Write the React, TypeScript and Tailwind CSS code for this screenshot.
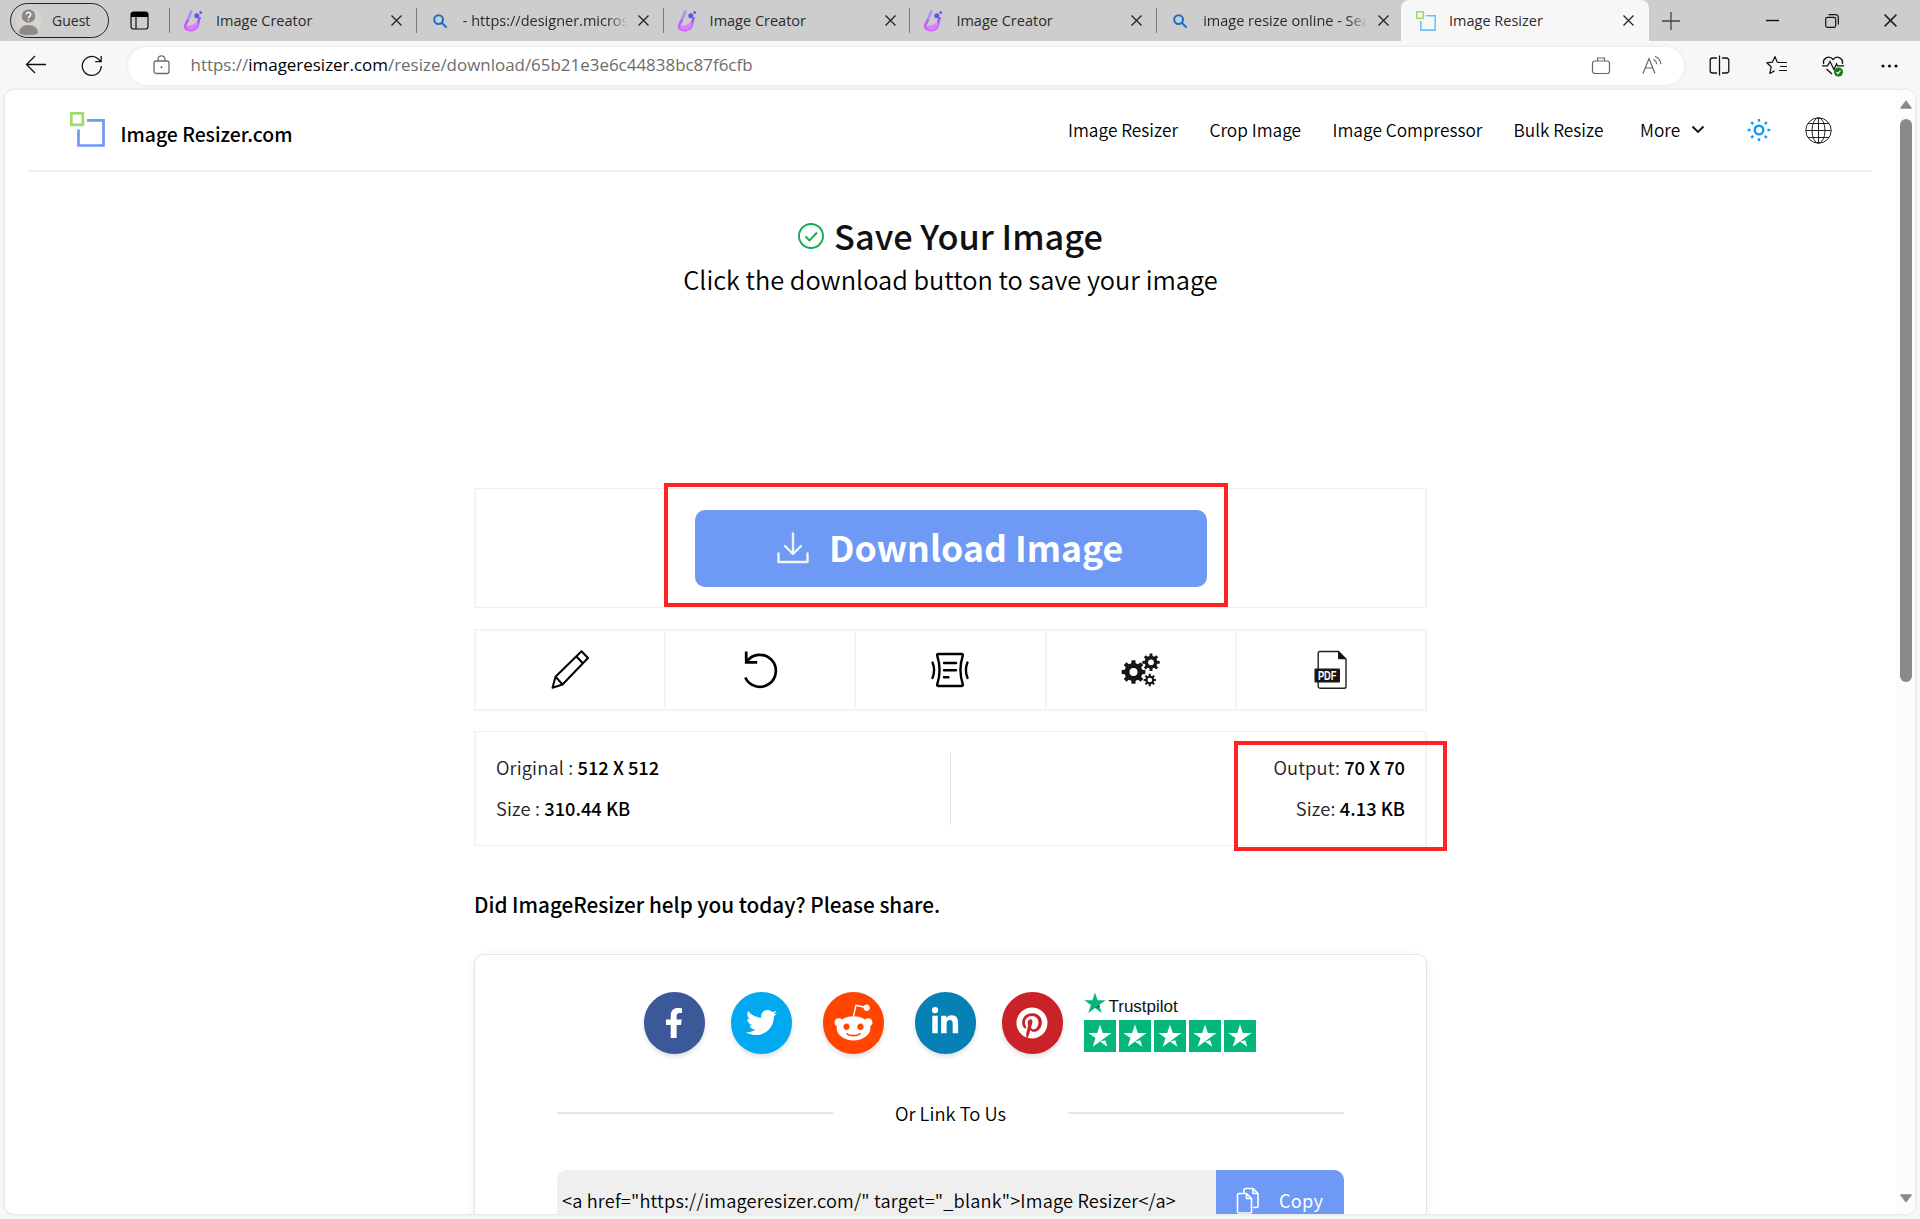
import type { ReactNode } from "react";
import { FaFacebookF, FaLinkedinIn, FaPinterest, FaRedditAlien, FaTwitter } from "react-icons/fa";

/* ---------- browser chrome icons ---------- */

function CloseX({ size = 11 }: { size?: number }) {
  return (
    <svg width={size} height={size} viewBox="0 0 11 11" stroke="#222" strokeWidth="1.3" className="shrink-0">
      <path d="M.5.5l10 10M10.5.5l-10 10" />
    </svg>
  );
}

function CreatorIcon() {
  return (
    <svg width="20" height="22" viewBox="0 0 20 22" fill="none">
      <defs>
        <linearGradient id="flask" x1="14" y1="5" x2="5" y2="21" gradientUnits="userSpaceOnUse">
          <stop stopColor="#7b5cf0" />
          <stop offset=".5" stopColor="#b765f5" />
          <stop offset="1" stopColor="#d95cf8" />
        </linearGradient>
      </defs>
      <path d="M8.200 1.500L3.800 12.500" stroke="#b98df5" strokeWidth="2.800" strokeLinecap="round" />
      <path d="M4.500 10.500L2.300 15C1.500 18.500 4.500 20.500 8.500 20.200c4.500-.4 6.500-3.500 6.800-7.200l.9-4.500" stroke="url(#flask)" strokeWidth="2.600" strokeLinecap="round" />
      <path d="M4 15.500c3 .5 6.500-.5 9.500-3.500l2 1.500c-1 4-3.500 6.500-7.500 6.500-3 0-5-1.500-4-4.500z" fill="#d982fa" />
      <circle cx="13.800" cy="5.800" r="2.500" fill="#5f55e8" />
      <circle cx="17.700" cy="2.600" r="1.400" fill="#6a48e6" />
      <circle cx="17" cy="8" r="1" fill="#7f64ee" />
    </svg>
  );
}

function SearchIcon() {
  return (
    <svg width="14" height="14" viewBox="0 0 14 14" fill="none" stroke="#1a6fc9" strokeWidth="2" strokeLinecap="round">
      <circle cx="5.600" cy="5.600" r="4.400" />
      <path d="M9 9l4 4" />
    </svg>
  );
}

function ResizerMark({ size, blue }: { size: number; blue: string }) {
  return (
    <svg width={size} height={size} viewBox="0 0 35 35" fill="none">
      <rect x="1.300" y="1.300" width="11.500" height="11.500" stroke="#a0da6c" strokeWidth="2.700" />
      <path d="M17 8.300h16.500v25.200H8.500V17.500" stroke={blue} strokeWidth="2.700" />
    </svg>
  );
}

function Tab({ icon, title, fade }: { icon: ReactNode; title: string; fade?: boolean }) {
  return (
    <div className="flex h-[41px] w-[246.8px] shrink-0 items-center">
      <div className="h-[25px] w-px shrink-0 bg-[#7a7a7a]" />
      <div className="flex w-[46px] shrink-0 justify-center">{icon}</div>
      <div
        className={
          fade
            ? "w-[175px] whitespace-nowrap leading-[40px] [mask-image:linear-gradient(to_right,#000_83%,transparent_94%)]"
            : "w-[175px] whitespace-nowrap leading-[40px]"
        }
      >
        {title}
      </div>
      <CloseX />
    </div>
  );
}

function TabBar() {
  return (
    <div className="flex h-[41px] shrink-0 items-center bg-[#cdcdcd] text-[14.500px] text-[#2b2b2b]">
      <div className="ml-[10px] flex h-[35px] w-[99px] shrink-0 items-center rounded-full border-[1.500px] border-[#222] text-[14px]">
        <svg width="26" height="30" viewBox="0 0 26 30" className="ml-[5px]">
          <circle cx="13" cy="15" r="13" fill="#d6d3cf" />
          <circle cx="12.500" cy="10" r="6.800" fill="#8d8a86" />
          <path d="M3 27c0-5 4-8 9.500-8s9.500 3 9.500 8c-3 3-16 3-19 0z" fill="#8d8a86" />
          <path d="M10.300 8.500a2.200 2.200 0 1 1 3.400 1.900c-.8.500-1.200.8-1.200 1.700M12.500 13.200v1.300" fill="none" stroke="#fff" strokeWidth="1.400" />
        </svg>
        <span className="ml-[10px]">Guest</span>
      </div>
      <svg width="19" height="19" viewBox="0 0 19 19" className="ml-[21px] shrink-0">
        <rect x="1" y="1" width="17" height="17" rx="2.500" fill="none" stroke="#111" strokeWidth="1.200" />
        <path d="M1 6V3.500A2.500 2.500 0 0 1 3.500 1h12A2.500 2.500 0 0 1 18 3.500V6z" fill="#000" />
        <path d="M6 6v12" stroke="#111" strokeWidth="1.200" />
      </svg>
      <div className="ml-[20px] flex w-[1232px] shrink-0">
        <Tab icon={<CreatorIcon />} title="Image Creator" />
        <Tab icon={<SearchIcon />} title="- https://designer.micros" fade />
        <Tab icon={<CreatorIcon />} title="Image Creator" />
        <Tab icon={<CreatorIcon />} title="Image Creator" />
        <Tab icon={<SearchIcon />} title="image resize online - Sea" fade />
      </div>
      <div className="relative flex h-[41px] w-[248px] shrink-0 items-center rounded-t-[8px] bg-[#f7f7f7]">
        <div className="ml-[15px]">
          <ResizerMark size={20} blue="#6cc0f8" />
        </div>
        <span className="ml-[13px] w-[174px] leading-[40px]">Image Resizer</span>
        <CloseX />
      </div>
      <svg width="18" height="18" viewBox="0 0 18 18" stroke="#444" strokeWidth="1.300" className="ml-[13px] shrink-0">
        <path d="M9 0v18M0 9h18" />
      </svg>
      <svg width="13" height="13" viewBox="0 0 13 13" stroke="#111" strokeWidth="1.400" className="ml-[86px] shrink-0">
        <path d="M0 6.500h13" />
      </svg>
      <svg width="14" height="14" viewBox="0 0 14 14" fill="none" stroke="#111" strokeWidth="1.200" className="ml-[46px] shrink-0">
        <rect x=".7" y="3.300" width="10" height="10" rx="1.800" />
        <path d="M3.500.7h7.300a2.500 2.500 0 0 1 2.500 2.500v7.300" />
      </svg>
      <div className="ml-[45px]">
        <CloseX size={13} />
      </div>
    </div>
  );
}

function AddressBar() {
  return (
    <div className="flex h-[49px] shrink-0 items-center">
      <svg width="22" height="20" viewBox="0 0 22 20" fill="none" stroke="#111" strokeWidth="1.300" className="mb-px ml-[25px]">
        <path d="M21 9.500H1.500M10 1L1.500 9.500 10 18" />
      </svg>
      <svg width="22" height="22" viewBox="0 0 22 22" fill="none" stroke="#111" strokeWidth="1.300" className="ml-[34px]">
        <path d="M20.300 11a9.500 9.500 0 1 1-3-7l2.500 2.500M20.200 1v5.700h-6" />
      </svg>
      <div className="ml-[25px] flex h-[38px] w-[1556px] items-center rounded-full bg-white shadow-[0_0_4px_rgba(0,0,0,0.08)]">
        <svg width="17" height="20" viewBox="0 0 17 20" fill="none" stroke="#6a6a6a" strokeWidth="1.300" className="mb-px ml-[25px]">
          <rect x="1" y="6" width="15" height="12.500" rx="2" />
          <path d="M5 6V4.300a3.500 3.500 0 0 1 7 0V6" />
          <circle cx="8.500" cy="12.200" r=".9" fill="#444" stroke="none" />
        </svg>
        <div className="mb-px ml-[20.500px] w-[1379.500px] text-[16.950px] leading-[38px] text-[#6c6c6c]">
          https://<span className="text-black">imageresizer.com</span>/resize/download/65b21e3e6c44838bc87f6cfb
        </div>
        <svg width="20" height="19" viewBox="0 0 20 19" fill="none" stroke="#666" strokeWidth="1.200" className="mb-px ml-[21px]">
          <rect x="1.500" y="5" width="17" height="12.500" rx="2.500" />
          <path d="M6.500 5V2h7v3" />
        </svg>
        <svg width="21" height="20" viewBox="0 0 21 20" fill="none" stroke="#666" strokeWidth="1.200" className="mb-px ml-[31px]">
          <path d="M1 18.500L7 3.500l6 15M3 13h8M11.500 4.200c1.800 1 3 2.600 3.300 5M13 1.200c3.500 1.500 5.500 4.200 6 8" />
        </svg>
      </div>
      <svg width="21" height="21" viewBox="0 0 21 21" fill="none" stroke="#111" strokeWidth="1.300" className="mb-px ml-[25px]">
        <path d="M8 3H3.500A2.300 2.300 0 0 0 1.200 5.300v10.400A2.300 2.300 0 0 0 3.500 18H8M13 3h4.500a2.300 2.300 0 0 1 2.300 2.300v10.400a2.300 2.300 0 0 1-2.300 2.300H13M10.500.5v20" />
      </svg>
      <svg width="22" height="21" viewBox="0 0 22 21" fill="none" stroke="#111" strokeWidth="1.200" strokeLinejoin="round" className="ml-[36px]">
        <path d="M13.500 7.500l-2.300-.4L9 1.500 6.500 7.100l-5.800.7 4.500 4-1.400 6.700 4.700-2.600M12 7.500h9M14 11.500h7M13 15.500h8" />
      </svg>
      <svg width="22" height="22" viewBox="0 0 22 22" fill="none" stroke="#111" strokeWidth="1.300" className="ml-[34px]">
        <path d="M1.800 9C0 3.500 7-.5 11 4.500 15-.5 22 3.500 20.200 9M0 10.800h5.500l2.500-4.300 4 8 2.500-5.500 1 1.800H22M4.500 14l5.500 5" />
        <circle cx="16.500" cy="17" r="4.500" fill="#107c10" stroke="none" />
        <path d="M14.500 17.200l1.400 1.400 2.600-3" stroke="#fff" strokeWidth="1.200" />
      </svg>
      <svg width="17" height="4" viewBox="0 0 17 4" fill="#111" className="ml-[37px]">
        <circle cx="2" cy="2" r="1.600" />
        <circle cx="8.500" cy="2" r="1.600" />
        <circle cx="15" cy="2" r="1.600" />
      </svg>
    </div>
  );
}

/* ---------- site header ---------- */

function SiteHeader() {
  return (
    <>
      <header className="flex h-[80px] shrink-0 items-center text-[17.300px] leading-[24px] text-black">
        <div className="mb-[2px] ml-[65px]">
          <ResizerMark size={35} blue="#6e99f5" />
        </div>
        <span className="mt-[7px] ml-[15.500px] w-[947.500px] text-[19.400px] font-medium text-black">Image Resizer.com</span>
        <nav className="flex font-[350]">
          <span className="w-[141.500px]">Image Resizer</span>
          <span className="w-[123px]">Crop Image</span>
          <span className="w-[181px]">Image Compressor</span>
          <span className="w-[126.500px]">Bulk Resize</span>
          <span className="w-[51px]">More</span>
        </nav>
        <svg width="14" height="9" viewBox="0 0 14 9" fill="none" stroke="#111" strokeWidth="1.800" className="mb-px">
          <path d="M1.500 1.500L7 7l5.500-5.500" />
        </svg>
        <svg width="24" height="24" viewBox="0 0 24 24" fill="none" stroke="#129ef0" strokeWidth="2.400" className="ml-[42px]">
          <circle cx="12" cy="12" r="4.300" />
          <path d="M12 1v2.800M12 20.200v2.800M.8 12h2.800M20.400 12h2.800M4.200 4.200l2 2M17.800 17.800l2 2M19.800 4.200l-2 2M6.200 17.800l-2 2" />
        </svg>
        <svg width="27" height="27" viewBox="0 0 27 27" fill="none" stroke="#222" strokeWidth="1" className="ml-[34px]">
          <circle cx="13.500" cy="13.500" r="12.700" />
          <ellipse cx="13.500" cy="13.500" rx="6.500" ry="12.700" />
          <path d="M13.500.8v25.400M.8 13.500h25.400M3 6.500h21M3 20.500h21" />
        </svg>
      </header>
      <div className="mx-[24px] h-[2px] shrink-0 bg-[#e9edf5]" />
    </>
  );
}

/* ---------- tool icons ---------- */

function PencilIcon() {
  return (
    <svg width="40" height="40" viewBox="0 0 40 40" fill="none" stroke="#000" strokeWidth="2" strokeLinejoin="round">
      <path d="M2.500 37.700l3-11L31.500 1.200l6.500 6.800L12.500 34.500zM5.500 26.700l7 7.800M26.500 6.500l6.500 7M2.500 37.700l10-3.200" />
    </svg>
  );
}

function UndoIcon() {
  return (
    <svg width="36" height="40" viewBox="0 0 36 40" fill="none" stroke="#000" strokeWidth="2.700">
      <path d="M3.300 27.500A16 16 0 1 0 4.500 12" />
      <path d="M4.200 1.500v10.800h11" />
    </svg>
  );
}

function StretchIcon() {
  return (
    <svg width="40" height="38" viewBox="0 0 40 38" fill="none" stroke="#000" strokeWidth="2.400" strokeLinecap="round" strokeLinejoin="round">
      <path d="M8.500 3h23q1.800 0 1.200 1.800-4.500 14.200 0 28.400.6 1.800-1.200 1.800h-23q-1.800 0-1.200-1.800 4.500-14.200 0-28.400Q6.700 3 8.500 3z" />
      <path d="M2.500 11.500q3.200 7.500 0 15.500M37.500 11.500q-3.200 7.500 0 15.500M14 12h12M14 19.300h12M14 26.300h4.500" />
    </svg>
  );
}

function gearPath(cx: number, cy: number, outer: number, inner: number, hole: number) {
  const teeth = 8;
  const pts: string[] = [];
  for (let i = 0; i < teeth; i++) {
    const base = (i * 2 * Math.PI) / teeth;
    const corners: [number, number][] = [
      [-0.24, inner],
      [-0.16, outer],
      [0.16, outer],
      [0.24, inner],
    ];
    for (const [offset, radius] of corners) {
      pts.push(`${(cx + radius * Math.cos(base + offset)).toFixed(2)} ${(cy + radius * Math.sin(base + offset)).toFixed(2)}`);
    }
  }
  return `M${pts.join("L")}ZM${cx - hole} ${cy}a${hole} ${hole} 0 1 0 ${hole * 2} 0a${hole} ${hole} 0 1 0 ${-hole * 2} 0Z`;
}

function GearsIcon() {
  return (
    <svg width="40" height="36" viewBox="0 0 40 36" fill="#161616" fillRule="evenodd">
      <path d={gearPath(12.5, 20, 12, 9, 4)} />
      <path d={gearPath(30, 10.3, 8.8, 6.4, 2.9)} />
      <path d={gearPath(28.8, 28, 6.3, 4.5, 2.3)} />
    </svg>
  );
}

function PdfIcon() {
  return (
    <svg width="34" height="40" viewBox="0 0 34 40">
      <path d="M24.500 1.500H6A1.800 1.800 0 0 0 4.200 3.300v33A1.800 1.800 0 0 0 6 38.200h24.200a1.800 1.800 0 0 0 1.800-1.800V9z" fill="#fff" stroke="#222" strokeWidth="1.400" />
      <path d="M24 1.200v6.500A1.500 1.500 0 0 0 25.500 9.300h6.800z" fill="#111" />
      <rect x=".5" y="18.500" width="25.500" height="14" rx="1" fill="#161616" />
      <text x="13.200" y="29.900" textAnchor="middle" fill="#fff" className="font-['Liberation_Sans'] text-[12px] font-bold" textLength="18.500" lengthAdjust="spacingAndGlyphs">
        PDF
      </text>
    </svg>
  );
}

/* ---------- share card ---------- */

function Star({ size, fill, notch }: { size: number; fill: string; notch: string }) {
  return (
    <svg width={size} height={size} viewBox="0 0 24 24">
      <path d="M12 .6l2.800 8.300h8.900l-7.200 5.200 2.800 8.700L12 17.500l-7.300 5.300 2.800-8.700L.3 8.900h8.900z" fill={fill} />
      <path d="M12 17.500l4.500-3.400.9 2.100z" fill={notch} />
    </svg>
  );
}

function ShareCircle({ className, children }: { className: string; children: ReactNode }) {
  return (
    <div className={`flex h-[61.500px] w-[61.500px] items-center justify-center rounded-full text-white shadow-[0_3px_4px_rgba(0,0,0,0.12)] ${className}`}>
      {children}
    </div>
  );
}

function ShareCard() {
  return (
    <div className="mt-[31px] flex h-[320px] flex-col rounded-[10px] border border-[#e2e4e9] shadow-[0_2px_10px_rgba(0,0,0,0.07)]">
      <div className="mt-[37px] ml-[168.500px] flex">
        <ShareCircle className="bg-[#3b5998]">
          <FaFacebookF size={30} />
        </ShareCircle>
        <ShareCircle className="ml-[25.500px] bg-[#03a9f0]">
          <FaTwitter size={31} />
        </ShareCircle>
        <ShareCircle className="ml-[30.500px] bg-[#ff4500]">
          <FaRedditAlien size={41} />
        </ShareCircle>
        <ShareCircle className="ml-[30.500px] bg-[#0680b5]">
          <FaLinkedinIn size={30} className="mb-px" />
        </ShareCircle>
        <ShareCircle className="ml-[25.500px] bg-[#c92228]">
          <FaPinterest size={32} />
        </ShareCircle>
        <div className="ml-[20.500px]">
          <div className="flex h-[28px]">
            <Star size={22} fill="#04b67a" notch="#07603f" />
            <span className="mt-[5px] ml-[3px] font-['Liberation_Sans'] text-[17px] leading-[20px] text-[#111]">Trustpilot</span>
          </div>
          <div className="flex gap-[3px]">
            {[0, 1, 2, 3, 4].map((i) => (
              <div key={i} className="flex h-[32px] w-[32px] items-center justify-center bg-[#04b67a]">
                <Star size={24} fill="#fff" notch="#04b67a" />
              </div>
            ))}
          </div>
        </div>
      </div>
      <div className="mt-[43px] flex items-center pl-[82px] text-[18.400px] leading-[32px] font-[350] text-black">
        <div className="h-[2px] w-[276px] bg-[#e4e6e9]" />
        <span className="w-[235px] pb-px text-center">Or Link To Us</span>
        <div className="h-[2px] w-[276px] bg-[#e4e6e9]" />
      </div>
      <div className="mt-[40px] ml-[82px] flex h-[64px] w-[787px] items-start overflow-hidden rounded-[10px] bg-[#efefef] text-[18.200px] leading-[26px] font-[350]">
        <div className="w-[659px] pt-[17px] pl-[5px] tracking-[0.180px] whitespace-nowrap text-black">
          {'<a href="https://imageresizer.com/" target="_blank">Image Resizer</a>'}
        </div>
        <div className="flex h-full w-[128px] items-start bg-[#6e99f5] pt-[17px] text-white">
          <svg width="24" height="28" viewBox="0 0 24 28" fill="none" stroke="#fff" strokeWidth="1.600" strokeLinejoin="round" className="ml-[20px]">
            <path d="M8 6V3a1.500 1.500 0 0 1 1.500-1.500H17l5 5V19a1.500 1.500 0 0 1-1.500 1.500H17M17 1.500v5h5" />
            <path d="M1.500 8A1.500 1.500 0 0 1 3 6.500h7.500l5 5V24.500a1.500 1.500 0 0 1-1.500 1.500H3a1.500 1.500 0 0 1-1.500-1.500zM10.500 6.500v5h5" />
          </svg>
          <span className="ml-[19px] font-normal tracking-[0.200px]">Copy</span>
        </div>
      </div>
    </div>
  );
}

/* ---------- page body ---------- */

function PageBody() {
  return (
    <main className="ml-[469px] w-[953px]">
      <div className="mt-[45px] flex h-[36px] items-center justify-center text-[34.300px] leading-[36px] font-medium text-[#111]">
        <svg width="26" height="26" viewBox="0 0 26 26" fill="none" stroke="#12ad50" strokeWidth="1.900" className="mt-px mr-[10px]">
          <circle cx="13" cy="13" r="12" />
          <path d="M7.500 13.500l4 4 7.500-8" />
        </svg>
        Save Your Image
      </div>
      <div className="mt-[10px] text-center text-[25.400px] leading-[32px] font-[350] text-black">Click the download button to save your image</div>

      <div className="relative mt-[193px] flex h-[120px] items-center justify-center border-x-2 border-y border-x-[#f4f4f4] border-y-[#efefef]">
        <button className="flex h-[77px] w-[512px] items-center rounded-[10px] bg-[#6e99f5] text-[35.600px] leading-[70px] font-semibold text-white">
          <svg width="32" height="32" viewBox="0 0 32 32" fill="none" stroke="#f1f3f8" strokeWidth="2.400" strokeLinejoin="round" strokeLinecap="round" className="ml-[82px]">
            <path d="M1.500 21.500v8.500h29v-8.500M16 1.500v20.500M8 14l8 8 8-8" />
          </svg>
          <span className="mb-[3px] ml-[20.500px]">Download Image</span>
        </button>
        <div className="absolute -top-[6px] left-[188px] h-[124px] w-[564px] border-4 border-[#fe2424]" />
      </div>

      <div className="mt-[21px] grid h-[82px] grid-cols-5 border-y-2 border-r-2 border-[#f4f4f4]">
        {[<PencilIcon />, <UndoIcon />, <StretchIcon />, <GearsIcon />, <PdfIcon />].map((icon, i) => (
          <div key={i} className="flex items-center justify-center border-l-2 border-[#f4f4f4]">
            {icon}
          </div>
        ))}
      </div>

      <div className="relative mt-[20px] flex h-[115px] justify-between border-x-2 border-y border-x-[#f4f4f4] border-y-[#efefef] px-[20px] pt-[15px] text-[18.300px] leading-[41px] text-black">
        <div className="w-[454px]">
          <div>
            <span className="font-[350] tracking-[0.150px] text-[#222]">Original : </span>
            <span className="font-medium">512 X 512</span>
          </div>
          <div>
            <span className="font-[350] tracking-[0.150px] text-[#222]">Size : </span>
            <span className="font-medium">310.44 KB</span>
          </div>
        </div>
        <div className="mt-[6px] h-[72px] w-px bg-[#e3e3e6]" />
        <div className="w-[454px] text-right">
          <div>
            <span className="font-[350] tracking-[0.150px] text-[#222]">Output: </span>
            <span className="font-medium">70 X 70</span>
          </div>
          <div>
            <span className="font-[350] tracking-[0.150px] text-[#222]">Size: </span>
            <span className="font-medium">4.13 KB</span>
          </div>
        </div>
        <div className="absolute top-[9px] left-[758px] h-[110px] w-[213px] border-4 border-[#fe2424]" />
      </div>

      <h2 className="mt-[39px] text-[20.700px] leading-[38px] font-medium text-black">Did ImageResizer help you today? Please share.</h2>
      <ShareCard />
    </main>
  );
}

export default function App() {
  return (
    <div className="flex h-[1219px] w-[1920px] flex-col overflow-hidden bg-[#f7f7f7] font-['Open_Sans',sans-serif]">
      <TabBar />
      <AddressBar />
      <div className="mx-[5px] flex h-[1124px] shrink-0 overflow-hidden rounded-[9px] bg-white shadow-[0_0_3px_rgba(0,0,0,0.15)]">
        <div className="flex h-full w-[1891px] flex-col overflow-hidden font-['Noto_Sans_CJK_SC',sans-serif]">
          <SiteHeader />
          <PageBody />
        </div>
        <div className="flex w-[19px] flex-col items-center bg-[#fcfcfc] pt-[10px] pb-[11px]">
          <svg width="12" height="9" viewBox="0 0 12 9" fill="#8a8a8a">
            <path d="M6 .3l5.700 7.500q.2 1-.8 1H1.100q-1 0-.8-1z" />
          </svg>
          <div className="mt-[10px] h-[563px] w-[12px] rounded-full bg-[#8a8a8a]" />
          <svg width="12" height="9" viewBox="0 0 12 9" fill="#8a8a8a" className="mt-auto">
            <path d="M6 8.700L.3 1.200q-.2-1 .8-1h9.800q1 0 .8 1z" />
          </svg>
        </div>
      </div>
    </div>
  );
}
